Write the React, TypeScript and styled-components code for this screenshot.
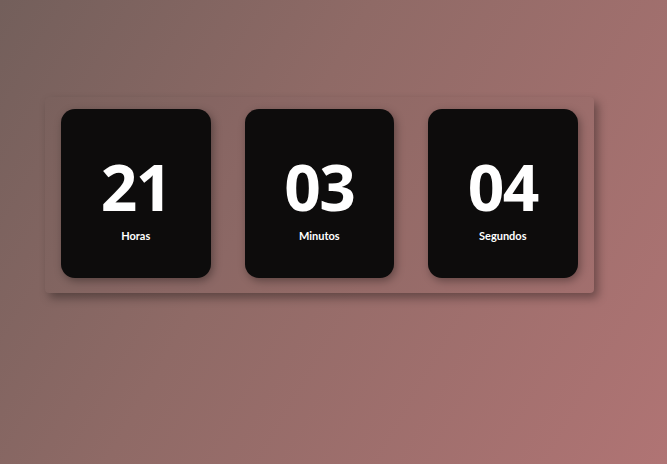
import React from "react";
import styled, { createGlobalStyle } from "styled-components";

const Global = createGlobalStyle`
  html, body { margin: 0; padding: 0; }
  body {
    width: 667px;
    height: 464px;
    overflow: hidden;
    background: linear-gradient(120deg, #735f5b 0%, #8f6a66 40%, #b07474 100%);
    font-family: "Open Sans", "Liberation Sans", sans-serif;
  }
`;

const Page = styled.div`
  padding: 97px 0 0 45px;
`;

const Panel = styled.div`
  display: inline-flex;
  gap: 34px;
  padding: 12px 16px 15px 16px;
  border-radius: 4px;
  background: rgba(120, 90, 90, 0.08);
  box-shadow: 4px 5px 10px rgba(0, 0, 0, 0.35);
`;

const Card = styled.div`
  width: 149.5px;
  height: 169px;
  border-radius: 14px;
  background: #0d0c0c;
  box-shadow: 2px 3px 8px rgba(0, 0, 0, 0.35);
  display: flex;
  flex-direction: column;
  align-items: center;
  justify-content: center;
  color: #fff;
`;

const Value = styled.div`
  font-size: 64px;
  font-weight: 700;
  line-height: 1;
  letter-spacing: -1.5px;
  margin-top: 10px;
`;

const Label = styled.div`
  font-family: Lato, "Open Sans", sans-serif;
  font-size: 11px;
  font-weight: 700;
  line-height: 13px;
  margin-top: 10px;
`;

const units = [
  { v: "21", l: "Horas" },
  { v: "03", l: "Minutos" },
  { v: "04", l: "Segundos" },
];

export default function App() {
  return (
    <>
      <Global />
      <Page>
        <Panel>
          {units.map((u) => (
            <Card key={u.l}>
              <Value>{u.v}</Value>
              <Label>{u.l}</Label>
            </Card>
          ))}
        </Panel>
      </Page>
    </>
  );
}
